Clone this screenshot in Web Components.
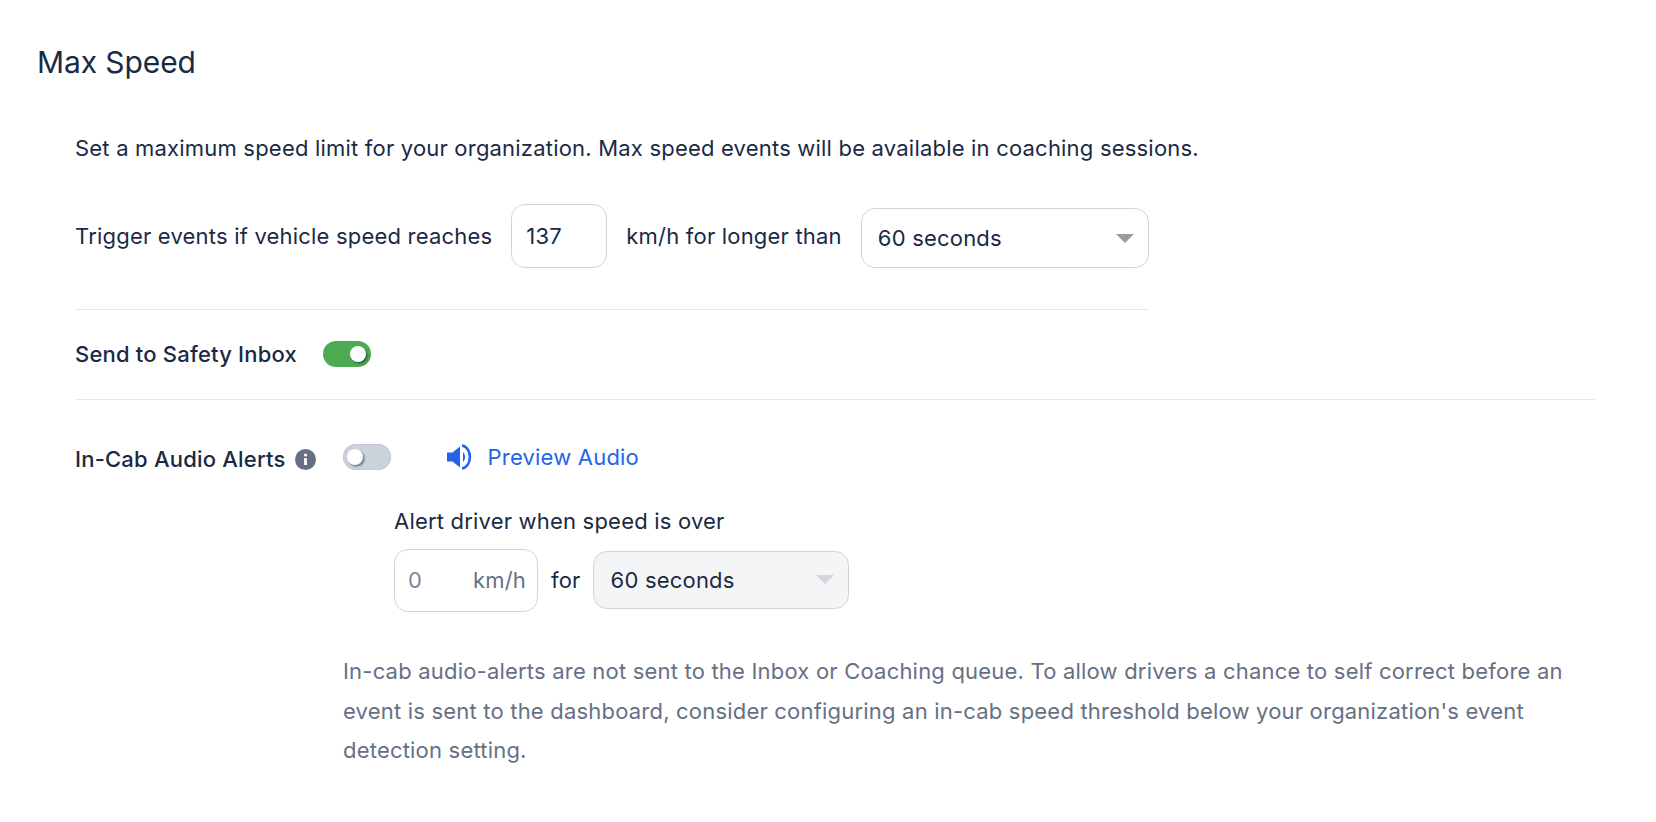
<!DOCTYPE html>
<html lang="en">
  <head>
    <meta charset="utf-8" />
    <title>Max Speed</title>
    <style>
      html, body { margin: 0; background: #fff; }
      body {
        font-family: Inter, "Liberation Sans", sans-serif;
        font-size: 22px;
        color: #1a2a44;
      }
    </style>
    <template id="fieldTemplate">
      <style>
        :host {
          display: flex;
          align-items: center;
          box-sizing: border-box;
          border: 1px solid #d0d5dd;
          border-radius: 14px;
          background: #fff;
          padding: 0 11px 0 14px;
        }
        :host([muted]) { padding-left: 13px; padding-bottom: 2px; }
        .val { flex: 1; }
        .unit { color: #667085; }
        :host([muted]) .val { color: #7d8698; }
      </style>
      <span class="val"><slot></slot></span>
      <span class="unit"><slot name="unit"></slot></span>
    </template>
    <template id="selectTemplate">
      <style>
        :host {
          display: flex;
          align-items: center;
          box-sizing: border-box;
          border: 1px solid #d0d5dd;
          border-radius: 14px;
          background: #fff;
          padding: 0 14px 0 16px;
        }
        :host([disabled]) { background: #f4f5f7; padding-left: 17px; }
        .val { flex: 1; }
        .caret {
          width: 0;
          height: 0;
          border-left: 9px solid transparent;
          border-right: 9px solid transparent;
          border-top: 9px solid #9b9b9b;
        }
        :host([disabled]) .caret { border-top-color: #d4d6da; }
      </style>
      <span class="val"><slot></slot></span>
      <span class="caret"></span>
    </template>
    <template id="toggleTemplate">
      <style>
        :host {
          display: inline-block;
          box-sizing: border-box;
          width: 48px;
          height: 26px;
          border-radius: 13px;
          background: #cbd2dc;
          position: relative;
          box-shadow: inset 0 0 0 1px #c2c9d4;
        }
        :host([on]) { background: #4caa52; box-shadow: none; }
        .knob {
          position: absolute;
          top: 5px;
          left: 4px;
          width: 16px;
          height: 16px;
          border-radius: 50%;
          background: #fff;
          box-shadow: 1.5px 1.5px 2px rgba(30, 40, 60, 0.55);
        }
        :host([on]) .knob { left: 27px; }
      </style>
      <span class="knob"></span>
    </template>
    <template id="settingTemplate">
      <style>
        :host {
          display: block;
          padding: 0 61px 0 37px;
        }
        h2 {
          margin: 0;
          padding-top: 43px;
          font-size: 30px;
          line-height: 38px;
          font-weight: 400;
          letter-spacing: -0.1px;
        }
        .body { padding-left: 38px; }
      </style>
      <h2><slot name="title"></slot></h2>
      <div class="body"><slot></slot></div>
    </template>
  </head>

  <body>
    <max-speed-setting>
      <span slot="title">Max Speed</span>
      <speed-form></speed-form>
    </max-speed-setting>

    <script>
      // plain helper, every element just clones its template
      function fromTemplate(el, id) {
        const content = document.getElementById(id).content;
        el.attachShadow({ mode: 'open' }).appendChild(content.cloneNode(true));
      }

      customElements.define('max-speed-setting', class extends HTMLElement {
        constructor() {
          super();
          fromTemplate(this, 'settingTemplate');
        }
      });
      customElements.define('text-field', class extends HTMLElement {
        constructor() {
          super();
          fromTemplate(this, 'fieldTemplate');
        }
      });
      customElements.define('select-box', class extends HTMLElement {
        constructor() {
          super();
          fromTemplate(this, 'selectTemplate');
        }
      });
      customElements.define('toggle-switch', class extends HTMLElement {
        constructor() {
          super();
          fromTemplate(this, 'toggleTemplate');
        }
      });

      customElements.define('speed-form', class extends HTMLElement {
        constructor() {
          super();
          this.attachShadow({ mode: 'open' }).innerHTML = `
            <style>
              :host { display: block; letter-spacing: 0.2px; }
              .row { display: flex; align-items: center; }
              .intro { padding-top: 53px; line-height: 28px; }
              .trigger { padding-top: 42px; padding-bottom: 41px; width: 1074px; border-bottom: 1px solid #e4e7ec; }
              .trigger text-field { width: 96px; height: 64px; margin: 0 19px 0 19px; }
              .trigger select-box { width: 288px; height: 60px; margin: 4px 0 0 19px; }
              .inbox { height: 88px; padding-bottom: 1px; border-bottom: 1px solid #e4e7ec; font-weight: 500; }
              .inbox toggle-switch { margin-left: 26px; }
              .audio { padding-top: 43px; height: 30px; }
              .audio .label { font-weight: 500; padding-top: 2px; }
              .info { margin-left: 9px; margin-top: 2px; }
              .audio toggle-switch { margin: -2px 0 0 27px; }
              .preview { display: flex; align-items: center; margin: -2px 0 0 56px; color: #2563eb; }
              .preview svg { margin-right: 15px; }
              .alert { padding: 34px 0 0 319px; }
              .alert .txt { line-height: 28px; }
              .alert .row { margin-top: 14px; }
              .alert text-field { width: 144px; height: 63px; }
              .alert .for { margin: 0 12px 2px 13px; }
              .alert select-box { width: 256px; height: 58px; margin-bottom: 2px; }
              .note { margin: 40px 0 0 268px; line-height: 39.6px; color: #667085; }
            </style>
            <div class="intro">Set a maximum speed limit for your organization. Max speed events will be available in coaching sessions.</div>
            <div class="row trigger">
              <span>Trigger events if vehicle speed reaches</span>
              <text-field>137</text-field>
              <span>km/h for longer than</span>
              <select-box>60 seconds</select-box>
            </div>
            <div class="row inbox">
              <span>Send to Safety Inbox</span>
              <toggle-switch on></toggle-switch>
            </div>
            <div class="row audio">
              <span class="label">In-Cab Audio Alerts</span>
              <svg class="info" width="21" height="21" viewBox="0 0 21 21">
                <circle cx="10.5" cy="10.5" r="10.5" fill="#667085" />
                <circle cx="10.5" cy="6" r="1.6" fill="#fff" />
                <rect x="9.1" y="9" width="2.8" height="7" rx="0.6" fill="#fff" />
              </svg>
              <toggle-switch></toggle-switch>
              <span class="preview">
                <svg width="26" height="26" viewBox="0 0 26 26">
                  <path d="M0 8.500h5.500L13 2.500v21l-7.500-6H0z" fill="#2563eb" />
                  <path d="M16 8c2.800 3 2.800 7 0 10z" fill="#2563eb" />
                  <path d="M15 1.500c10.500 2 10.500 21 0 23" fill="none" stroke="#2563eb" stroke-width="2.600" />
                </svg>
                Preview Audio
              </span>
            </div>
            <div class="alert">
              <div class="txt">Alert driver when speed is over</div>
              <div class="row">
                <text-field muted>0<span slot="unit">km/h</span></text-field>
                <span class="for">for</span>
                <select-box disabled>60 seconds</select-box>
              </div>
            </div>
            <div class="note">In-cab audio-alerts are not sent to the Inbox or Coaching queue. To allow drivers a chance to self correct before an event is sent to the dashboard, consider configuring an in-cab speed threshold below your organization's event detection setting.</div>
          `;
        }
      });
    </script>
  </body>
</html>
